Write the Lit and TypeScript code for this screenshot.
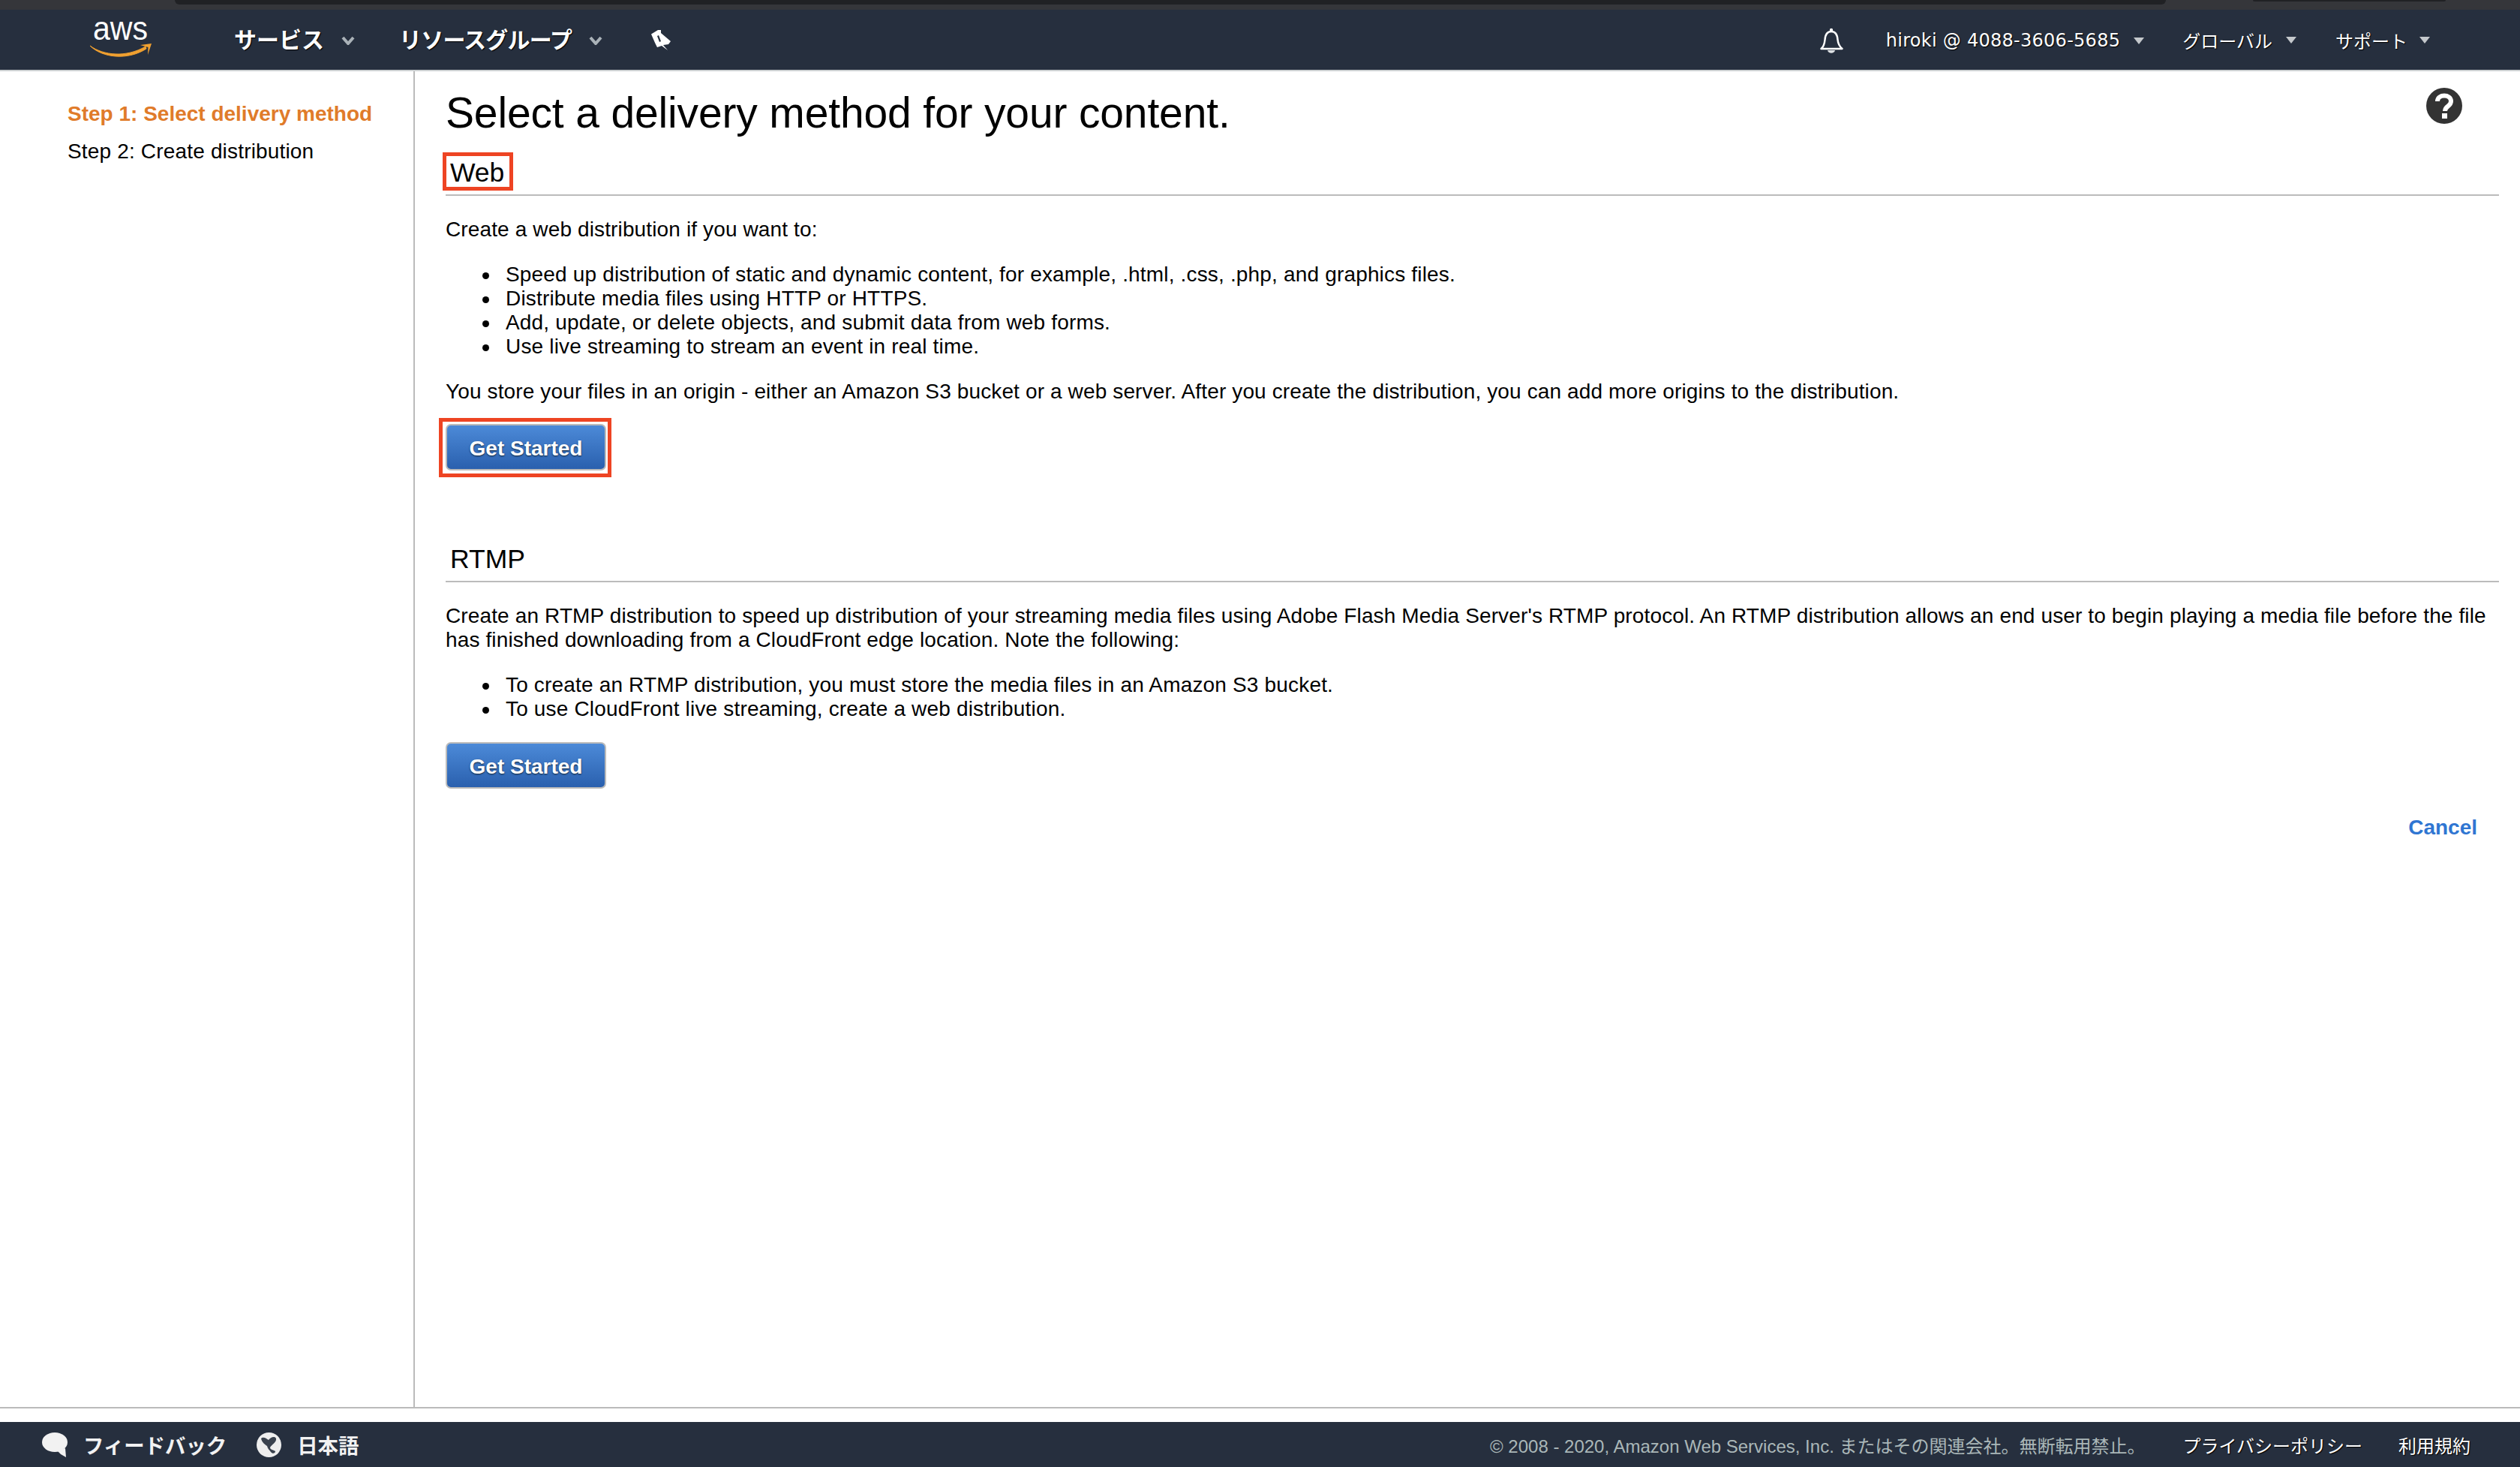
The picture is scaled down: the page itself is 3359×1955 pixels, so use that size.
import { LitElement, html, css, svg } from "lit";
import { customElement } from "lit/decorators.js";

const chevron = svg`<svg class="chev" viewBox="0 0 18 12" width="18" height="12"><path d="M2 2 L9 10 L16 2" fill="none" stroke="#aab2b8" stroke-width="4"/></svg>`;
const tri = svg`<svg class="tri" viewBox="0 0 16 10" width="16" height="10"><path d="M1 1 H15 L8 10 Z" fill="#c4c8cc"/></svg>`;

@customElement("app-root")
export class AppRoot extends LitElement {
  static styles = css`
    :host { display: flex; flex-direction: column; height: 1955px; font-family: "Liberation Sans", "Noto Sans CJK JP", sans-serif; color: #000; background: #fff; overflow: hidden; }
    .chrome { height: 13px; background: #35363a; display: flex; flex: none; }
    .tab1 { margin-left: 233px; width: 2654px; height: 6px; background: #202124; border-radius: 0 0 8px 8px; }
    .tab2 { margin-left: 116px; width: 257px; height: 2px; background: #202124; border-radius: 0 0 6px 6px; }
    header { height: 80px; flex: none; background: #262f3e; border-bottom: 2px solid #ccd0d2; display: flex; align-items: center; color: #fff; }
    .jp { font-family: "Noto Sans CJK JP", sans-serif; }
    .logo { margin-left: 118px; width: 86px; height: 80px; flex: none; }
    .logo text { font-family: "Liberation Sans", sans-serif; font-size: 44px; fill: #fff; }
    .nav { display: flex; align-items: center; font-size: 30px; font-weight: 700; text-shadow: 1px 1px 1px #000; white-space: nowrap; }
    .nav span { padding-bottom: 4px; }
    .nav.services { margin-left: 108px; }
    .nav.groups { margin-left: 59px; }
    .nav.groups span { letter-spacing: -0.8px; }
    .chev { margin: 2px 0 0 23px; flex: none; }
    .pin { margin-left: 46px; margin-top: -6px; flex: none; }
    .spacer { flex: 1; }
    .bell { flex: none; }
    .util { display: flex; align-items: center; font-size: 24px; white-space: nowrap; text-shadow: 1px 1px 1px #000; }
    .util .tri { margin-left: 17px; flex: none; }
    .util.acct { margin-left: 35px; font-family: "DejaVu Sans", "Noto Sans CJK JP", sans-serif; letter-spacing: 0.27px; padding-top: 2px; }
    .util.region { margin-left: 50px; }
    .util.support { margin-left: 51px; margin-right: 119px; }
    .util.support .tri { margin-left: 15px; }
    .body { flex: 1; display: flex; min-height: 0; }
    .side { width: 461px; flex: none; border-right: 2px solid #bbb; padding: 41px 0 0 90px; font-size: 28px; line-height: 32px; letter-spacing: 0.17px; }
    .side .on { color: #e07b2a; font-weight: 700; margin-bottom: 18px; letter-spacing: 0; }
    .main { flex: 1; min-width: 0; padding: 20px 28px 0 41px; position: relative; }
    h1 { margin: 0; font-size: 57px; line-height: 70px; font-weight: 400; letter-spacing: -0.15px; }
    .help { position: absolute; left: 2681px; top: 22px; }
    h2 { margin: 18px 0 0; height: 56px; font-size: 35.5px; line-height: 51px; font-weight: 400; border-bottom: 2px solid #bbb; }
    .boxed { display: inline-block; margin-left: -4px; padding-left: 5px; width: 94px; height: 51px; box-sizing: border-box; border: 5px solid #ee4423; line-height: 44px; }
    h2.rtmp { margin-top: 82px; padding-left: 6px; line-height: 55px; }
    p { margin: 28px 0 0; font-size: 28px; line-height: 32px; letter-spacing: 0.13px; }
    p.first { margin-top: 29px; }
    ul { margin: 28px 0 0; padding: 0 0 0 80px; font-size: 28px; line-height: 32px; letter-spacing: 0.17px; list-style: none; }
    li { position: relative; }
    li::before { content: ""; position: absolute; left: -31px; top: 13px; width: 9px; height: 9px; border-radius: 50%; background: #000; }
    .mark { display: inline-block; margin: 19px 0 0 -9px; padding: 3px 2px 4px 4px; border: 5px solid #ee4423; }
    .btn { display: flex; align-items: center; justify-content: center; box-sizing: border-box; width: 214px; height: 62px; padding-top: 3px; border: 2px solid #bbb; border-radius: 7px; background: linear-gradient(#4c8ad8, #2a60ae); color: #fff; font-size: 28px; font-weight: 700; text-shadow: 0 1px 2px #123; }
    .btn.second { margin-top: 28px; }
    .cancel { margin: 36px 29px 0 0; text-align: right; color: #2f76d2; font-size: 28px; line-height: 32px; font-weight: 700; }
    .rule { height: 2px; background: #bbb; flex: none; }
    .gap { height: 18px; flex: none; }
    footer { height: 60px; flex: none; background: #262f3e; color: #fff; display: flex; align-items: center; white-space: nowrap; }
    .fb { margin-left: 56px; flex: none; }
    .fl { margin-left: 21px; font-size: 27.4px; font-weight: 700; color: #f2f2f2; }
    .globe { margin-left: 40px; flex: none; }
    .copy { font-size: 24px; color: #aab7b8; }
    .fr { font-size: 24px; color: #fff; text-shadow: 1px 1px 1px #000; }
    .fr.privacy { margin-left: 50px; }
    .fr.terms { margin-left: 48px; margin-right: 66px; }
  `;

  render() {
    return html`
      <div class="chrome"><div class="tab1"></div><div class="tab2"></div></div>
      <header>
        <svg class="logo" viewBox="0 0 86 80">
          <text x="6" y="40" textLength="73" lengthAdjust="spacingAndGlyphs">aws</text>
          <path d="M2 48 C20 61 50 64 76 49 L77 52 C52 68 18 64 2 48 Z" fill="#f0a030" stroke="#f0a030" stroke-width="1"/>
          <path d="M69 47 L84 45 L79 60 L79.5 50 Z" fill="#f0a030"/>
        </svg>
        <div class="nav services jp"><span>サービス</span>${chevron}</div>
        <div class="nav groups jp"><span>リソースグループ</span>${chevron}</div>
        <svg class="pin" viewBox="0 0 60 50" width="60" height="50">
          <path fill-rule="evenodd" d="M19 20.5 L28 15 L32 15 L32 19 L45 30 L42 34 L35 35 L41 42 L33 36 L27 38 L24 32 Z M27 23 L30 31 L32 30 L29 22 Z" fill="#fff"/>
        </svg>
        <div class="spacer"></div>
        <svg class="bell" viewBox="0 0 70 55" width="70" height="55">
          <path d="M18.5 39 C22 36 23 32 23.5 27 C24 20 27 16 32 16 C37 16 40 20 40.5 27 C41 32 43 36 46.5 39 Z" fill="none" stroke="#fff" stroke-width="2.5" stroke-linejoin="round"/>
          <circle cx="32" cy="14" r="2.2" fill="#fff"/>
          <path d="M27 41 C28 46 36 46 37 41 Z" fill="#dde1e4"/>
        </svg>
        <div class="util acct"><span>hiroki @ 4088-3606-5685</span>${tri}</div>
        <div class="util region jp"><span>グローバル</span>${tri}</div>
        <div class="util support jp"><span>サポート</span>${tri}</div>
      </header>
      <div class="body">
        <nav class="side">
          <div class="on">Step 1: Select delivery method</div>
          <div>Step 2: Create distribution</div>
        </nav>
        <main class="main">
          <svg class="help" viewBox="0 0 48 48" width="48" height="48">
            <circle cx="24" cy="24" r="24" fill="#333"/>
            <path d="M15 18 C15 8 33 8 33 18 C33 25 25 24 25 31" fill="none" stroke="#fff" stroke-width="6"/>
            <rect x="21" y="34" width="7" height="7" fill="#fff"/>
          </svg>
          <h1>Select a delivery method for your content.</h1>
          <h2><span class="boxed">Web</span></h2>
          <p class="first">Create a web distribution if you want to:</p>
          <ul>
            <li>Speed up distribution of static and dynamic content, for example, .html, .css, .php, and graphics files.</li>
            <li>Distribute media files using HTTP or HTTPS.</li>
            <li>Add, update, or delete objects, and submit data from web forms.</li>
            <li>Use live streaming to stream an event in real time.</li>
          </ul>
          <p>You store your files in an origin - either an Amazon S3 bucket or a web server. After you create the distribution, you can add more origins to the distribution.</p>
          <div class="mark"><div class="btn">Get Started</div></div>
          <h2 class="rtmp">RTMP</h2>
          <p class="first">Create an RTMP distribution to speed up distribution of your streaming media files using Adobe Flash Media Server's RTMP protocol. An RTMP distribution allows an end user to begin playing a media file before the file has finished downloading from a CloudFront edge location. Note the following:</p>
          <ul>
            <li>To create an RTMP distribution, you must store the media files in an Amazon S3 bucket.</li>
            <li>To use CloudFront live streaming, create a web distribution.</li>
          </ul>
          <div class="btn second">Get Started</div>
          <div class="cancel">Cancel</div>
        </main>
      </div>
      <div class="rule"></div>
      <div class="gap"></div>
      <footer>
        <svg class="fb" viewBox="0 0 34 33" width="34" height="33">
          <ellipse cx="17" cy="13" rx="17" ry="13" fill="#f2f2f2"/>
          <path d="M20 24 L31 21 L32 33 L25 29 Z" fill="#f2f2f2"/>
        </svg>
        <span class="fl jp">フィードバック</span>
        <svg class="globe" viewBox="0 0 33 33" width="33" height="33">
          <circle cx="16.5" cy="16.5" r="16.5" fill="#eee"/>
          <path d="M6 8 C9 5 13 8 16 10 C18 7 24 4 26 8 C27 13 20 16 18 20 C18 23 22 23 25 25 C25 28 21 29 19 26 C17 23 15 22 14 18 C11 16 7 13 6 8 Z" fill="#3a424e"/>
        </svg>
        <span class="fl jp">日本語</span>
        <div class="spacer"></div>
        <span class="copy">© 2008 - 2020, Amazon Web Services, Inc. またはその関連会社。無断転用禁止。</span>
        <span class="fr privacy jp">プライバシーポリシー</span>
        <span class="fr terms jp">利用規約</span>
      </footer>
    `;
  }
}
